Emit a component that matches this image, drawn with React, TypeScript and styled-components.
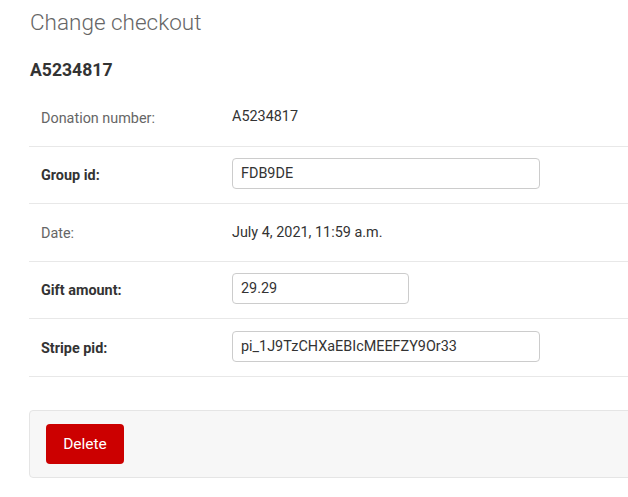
import React from "react";
import styled, { createGlobalStyle } from "styled-components";

const Global = createGlobalStyle`
  html, body { margin: 0; padding: 0; background: #fff; overflow: hidden; }
  body { font-family: Roboto, "Liberation Sans", sans-serif; color: #333; }
`;

const Page = styled.div`
  width: 100%;
  overflow: hidden;
`;

const Content = styled.div`
  width: 680px;
  padding: 0 0 0 29px;
  box-sizing: border-box;
`;

const Title = styled.h1`
  margin: 0;
  padding: 8px 0 0 1px;
  height: 28px;
  font-size: 22.5px;
  line-height: 28px;
  font-weight: 300;
  color: #666;
`;

const ObjectTitle = styled.h2`
  margin: 0;
  padding: 23px 0 0 1px;
  height: 30px;
  font-size: 17.6px;
  line-height: 22px;
  font-weight: 700;
  color: #333;
`;

const Fieldset = styled.div`
  display: flex;
  flex-direction: column;
`;

const Row = styled.div`
  display: flex;
  align-items: center;
  height: 57.5px;
  box-sizing: border-box;
  padding: 0 12px;
  border-bottom: 1px solid #e8e8e8;
`;

const Label = styled.label<{ $required?: boolean }>`
  width: 191px;
  flex: none;
  font-size: 14.4px;
  font-weight: ${(p) => (p.$required ? 700 : 400)};
  color: ${(p) => (p.$required ? "#333" : "#666")};
  padding-top: 2px;
`;

const Readonly = styled.div<{ $up?: boolean }>`
  font-size: 14.4px;
  color: #333;
  margin-top: ${(p) => (p.$up ? "-2px" : "0")};
`;

const Input = styled.input<{ $w: number }>`
  width: ${(p) => p.$w}px;
  height: 31px;
  margin-top: -2px;
  box-sizing: border-box;
  border: 1px solid #ccc;
  border-radius: 4px;
  padding: 0 8px;
  font-family: Roboto, "Liberation Sans", sans-serif;
  font-size: 14.4px;
  color: #333;
  outline: none;
  background: #fff;
`;

const SubmitRow = styled.div`
  margin-top: 33px;
  padding: 13px 16px 13px;
  background: #f7f7f7;
  border: 1px solid #e5e5e5;
  border-radius: 4px;
  display: flex;
`;

const DeleteButton = styled.a`
  display: inline-flex;
  align-items: center;
  justify-content: center;
  width: 78px;
  height: 40px;
  box-sizing: border-box;
  background: #cc0000;
  border-radius: 4px;
  color: #fff;
  font-size: 15.5px;
  text-decoration: none;
  cursor: pointer;
`;

export default function App() {
  return (
    <Page>
      <Global />
      <Content>
        <Title>Change checkout</Title>
        <ObjectTitle>A5234817</ObjectTitle>
        <Fieldset>
          <Row>
            <Label>Donation number:</Label>
            <Readonly $up>A5234817</Readonly>
          </Row>
          <Row>
            <Label $required>Group id:</Label>
            <Input $w={308} defaultValue="FDB9DE" />
          </Row>
          <Row>
            <Label>Date:</Label>
            <Readonly>July 4, 2021, 11:59 a.m.</Readonly>
          </Row>
          <Row>
            <Label $required>Gift amount:</Label>
            <Input $w={177} defaultValue="29.29" />
          </Row>
          <Row>
            <Label $required>Stripe pid:</Label>
            <Input $w={308} defaultValue="pi_1J9TzCHXaEBIcMEEFZY9Or33" />
          </Row>
        </Fieldset>
        <SubmitRow>
          <DeleteButton>Delete</DeleteButton>
        </SubmitRow>
      </Content>
    </Page>
  );
}
